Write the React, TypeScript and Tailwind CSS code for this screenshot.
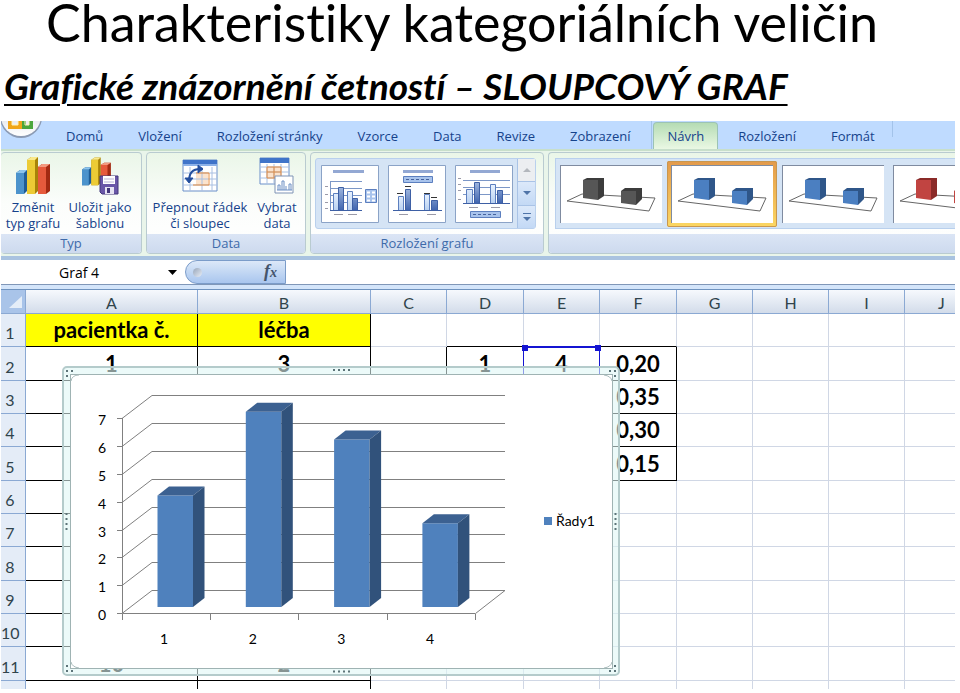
import type { ReactNode } from "react";
import clsx from "clsx";

const TABS = ["Domů", "Vložení", "Rozložení stránky", "Vzorce", "Data", "Revize", "Zobrazení"];

const COLUMNS = ["A", "B", "C", "D", "E", "F", "G", "H", "I", "J"];

const ROWS = [1, 2, 3, 4, 5, 6, 7, 8, 9, 10, 11];

const CELLS: Record<string, string> = {
  A1: "pacientka č.",
  B1: "léčba",
  A2: "1",
  B2: "3",
  D2: "1",
  E2: "4",
  F2: "0,20",
  F3: "0,35",
  F4: "0,30",
  F5: "0,15",
  A11: "10",
  B11: "2",
};

const SERIES = [4, 7, 6, 3];

export default function App() {
  return (
    <div className="bg-white font-['Lato',sans-serif] text-black">
      <header className="h-[121px] [font-variant-ligatures:none]">
        <h1 className="pr-[36px] text-center text-[52px] leading-[44px] whitespace-nowrap">
          Charakteristiky kategoriálních veličin
        </h1>
        <h2 className="mt-[20px] pl-[4px] text-[37px] leading-[44px] font-bold italic underline decoration-2 underline-offset-4 whitespace-nowrap">
          Grafické znázornění četností – SLOUPCOVÝ GRAF
        </h2>
      </header>
      <main className="ml-px mr-[5px] overflow-hidden">
        <TabBar />
        <Ribbon />
        <FormulaBar />
        <Sheet />
      </main>
    </div>
  );
}

// ── Ribbon ───────────────────────────────────────────────────────────

function TabBar() {
  return (
    <nav className="relative flex h-[28px] items-end bg-[#bfdbff] font-['Open_Sans',sans-serif] text-[13px] leading-[26px] text-[#15428b] whitespace-nowrap">
      <OfficeButton />
      <div className="flex flex-none gap-[35px] pl-[65px]">
        {TABS.map((tab) => (
          <button key={tab} type="button">{tab}</button>
        ))}
      </div>
      <div className="ml-[21px] flex h-full flex-none items-end border-l border-[#a3c3ea]">
        <button
          type="button"
          className="ml-px rounded-t-[4px] border border-b-0 border-[#9cc3b4] bg-linear-to-b from-[#b5dcb4] to-[#eaf8e4] px-[13px]"
        >
          Návrh
        </button>
        <button type="button" className="ml-[20px]">Rozložení</button>
        <button type="button" className="ml-[35px]">Formát</button>
      </div>
      <div className="ml-[17px] h-[16px] self-start border-l border-[#a3c3ea]" />
    </nav>
  );
}

function OfficeButton() {
  return (
    <button type="button" aria-label="Office" className="absolute left-0 top-0">
      <svg width="42" height="18" viewBox="0 0 42 18">
        <defs>
          <linearGradient id="orb" x1="0" y1="0" x2="0" y2="1">
            <stop offset="0" stopColor="#c6cbd6" />
            <stop offset="1" stopColor="#ffffff" />
          </linearGradient>
        </defs>
        <circle cx="20" cy="-4" r="21" fill="#8b9ab3" />
        <circle cx="20" cy="-5" r="20" fill="url(#orb)" />
        <path d="M9 0v6h10V0" fill="none" stroke="#f0a619" strokeWidth="4" />
        <path d="M23 0v6h7V0" fill="none" stroke="#4ca63c" strokeWidth="4" />
        <path d="M11 0v4h6V0M24 0v4h4V0" fill="none" stroke="#fff3b8" strokeWidth="1" />
      </svg>
    </button>
  );
}

function Ribbon() {
  return (
    <div className="flex h-[111px] gap-[4px] border-b-[4px] border-t-[2px] border-b-[#a9c3e0] border-t-[#c8dfcb] bg-[#e9f5ea] pt-[1px] pb-[2px] font-['Open_Sans',sans-serif] text-[13px] leading-[16px] text-[#15428b]">
      <Group label="Typ" className="w-[141px] border-l-0">
        <div className="flex">
          <Tool icon={<ChartTypeIcon />} label={"Změnit\ntyp grafu"} className="w-[64px]" />
          <Tool icon={<SaveTemplateIcon />} label={"Uložit jako\nšablonu"} className="w-[70px]" />
        </div>
      </Group>
      <Group label="Data" className="w-[160px]">
        <div className="flex">
          <Tool icon={<SwapIcon />} label={"Přepnout řádek\nči sloupec"} className="w-[106px]" />
          <Tool icon={<SelectDataIcon />} label={"Vybrat\ndata"} className="w-[48px]" />
        </div>
      </Group>
      <Group label="Rozložení grafu" className="w-[234px]">
        <div className="ml-[4px] mr-[7px] mt-[5px] flex h-[71px] rounded-[3px] border border-[#b9d0ed] bg-[#d5e4f5]">
          <div className="flex flex-1 items-center gap-[9px] pl-[5px]">
            {[0, 1, 2].map((kind) => (
              <button key={kind} type="button" aria-label={`Rozložení ${kind + 1}`}>
                <LayoutThumb kind={kind} />
              </button>
            ))}
          </div>
          <GalleryScroller />
        </div>
      </Group>
      <Group label="" className="min-w-0 flex-1 rounded-r-none border-r-0">
        <div className="ml-[6px] mt-[5px] flex h-[71px] items-center gap-px overflow-hidden border border-r-0 border-[#b9d0ed] bg-[#d5e4f5]">
          <StyleThumb name="Styl 1" front="#565656" side="#3c3c3c" />
          <StyleThumb name="Styl 2" front="#4b7fc1" side="#2f5689" selected />
          <StyleThumb name="Styl 3" front="#4b7fc1" side="#2f5689" />
          <StyleThumb name="Styl 4" front="#c14441" side="#8a2a28" />
        </div>
      </Group>
    </div>
  );
}

function Group({ label, className, children }: { label: string; className: string; children: ReactNode }) {
  return (
    <section
      className={clsx(
        "flex flex-none flex-col overflow-hidden rounded-[4px] border border-[#b9cbd0] bg-linear-to-b from-[#eaf6e8] via-[#fbfdfb] to-white",
        className,
      )}
    >
      <div className="flex-1">{children}</div>
      <div className="h-[19px] bg-linear-to-b from-[#dbe5f5] to-[#cddaee] text-center leading-[18px] text-[#3e6aaa]">
        {label}
      </div>
    </section>
  );
}

function Tool({ icon, label, className }: { icon: ReactNode; label: string; className: string }) {
  return (
    <button type="button" className={clsx("flex flex-none flex-col items-center pt-[4px]", className)}>
      {icon}
      <span className="mt-[4px] leading-[16px] whitespace-pre">{label}</span>
    </button>
  );
}

function Bars3D() {
  return (
    <g>
      <path d="M0 14l4-3h7v21l-3 3H0z" fill="#1f5c96" />
      <path d="M0 14h8v21H0z" fill="#4c93cc" />
      <path d="M0 14l4-3h7l-3 3z" fill="#8cc4ec" />
      <path d="M22 8l4-3h8v27l-4 3h-8z" fill="#a32a12" />
      <path d="M22 8h8v27h-8z" fill="#e65a3c" />
      <path d="M22 8l4-3h8l-4 3z" fill="#f39a80" />
      <path d="M11 1l4-3h7v34l-3 3h-8z" fill="#a88308" />
      <path d="M11 1h8v34h-8z" fill="#eccb35" />
      <path d="M11 1l4-3h7l-3 3z" fill="#fae98b" />
    </g>
  );
}

function ChartTypeIcon() {
  return (
    <svg width="36" height="38" viewBox="0 0 36 38">
      <g transform="translate(1 2)"><Bars3D /></g>
    </svg>
  );
}

function SaveTemplateIcon() {
  return (
    <svg width="38" height="38" viewBox="0 0 38 38">
      <g transform="translate(1 2) scale(.85 .75)"><Bars3D /></g>
      <path d="M19 19h18v18H21l-2-2z" fill="#6a57a8" stroke="#43367b" />
      <path d="M22 19h12v8H22z" fill="#fff" />
      <path d="M23 22h10M23 25h10" stroke="#b9b3d6" />
      <path d="M24 30h9v7h-9z" fill="#e6e3f3" />
      <path d="M26 31h3v5h-3z" fill="#43367b" />
    </svg>
  );
}

function SwapIcon() {
  return (
    <svg width="38" height="38" viewBox="0 0 38 38">
      <path d="M2 3h34v31H2z" fill="#fff" stroke="#6a8fc9" />
      <path d="M2 3h34v4H2z" fill="#3f74c9" />
      <path d="M2 7h34v2H2z" fill="#8db2e8" />
      <path d="M15 15h12v13H15z" fill="#fbe3cd" />
      <path d="M2 16h34M2 22h34M2 28h34M9 10v24M21 10v24M31 10v24" stroke="#a9c0e2" />
      <path d="M15 16h13v12H12" fill="none" stroke="#e98d3d" />
      <path d="M8 24C8 16 12 12 19 12" fill="none" stroke="#244f9e" strokeWidth="2" />
      <path d="M17 8l5 4-5 4z M4 21h8l-4 5z" fill="#244f9e" stroke="#244f9e" />
    </svg>
  );
}

function SelectDataIcon() {
  return (
    <svg width="36" height="38" viewBox="0 0 36 38">
      <path d="M1 1h29v26H1z" fill="#fff" stroke="#6a8fc9" />
      <path d="M1 1h29v5H1z" fill="#3f74c9" />
      <path d="M8 10h14v11H8z" fill="#fbe3cd" />
      <path d="M1 10h29M1 15h29M1 21h29M8 7v20M15 7v20M22 7v20" stroke="#a9c0e2" />
      <path d="M8 10h14v11H8zM15 10v11M8 15h14" fill="none" stroke="#e98d3d" />
      <path d="M16 19h18v17H16z" fill="#fff" stroke="#7f93b5" />
      <path d="M19 33v-5h2v5M23 33v-9h2v9M27 33v-4M30 33v-6h2v6" fill="none" stroke="#6d8fc4" />
      <path d="M18 33h15" stroke="#6d8fc4" />
    </svg>
  );
}

// Small chart previews: 0 = legend right, 1 = legend top, 2 = legend bottom
function LayoutThumb({ kind }: { kind: number }) {
  return (
    <svg width="58" height="58" viewBox="0 0 58 58">
      <defs>
        <linearGradient id="thumbDark" x1="0" y1="0" x2="0" y2="1">
          <stop offset="0" stopColor="#9db5de" />
          <stop offset="1" stopColor="#3f64ae" />
        </linearGradient>
        <linearGradient id="thumbLight" x1="0" y1="0" x2="0" y2="1">
          <stop offset="0" stopColor="#e8f2ff" />
          <stop offset="1" stopColor="#b8d0f0" />
        </linearGradient>
      </defs>
      <path d="M.5 .5h57v57H.5z" fill="#fff" stroke="#8ba3c7" />
      <path d={kind === 0 ? "M12 5h31v3H12z" : "M15 5h30v3H15z"} fill="#93a8d3" />
      {kind === 0 && (
        <g>
          <path d="M9 16.5h32M9 23.5h32M9 30.5h32M9 37.5h32M9.5 16v29" stroke="#7c97c7" />
          <path d="M4 21.5h3M4 29.5h3M4 37.5h3M4 43.5h3M13 49.5h9M27 49.5h9" stroke="#9a9aa8" />
          <path d="M12.5 28.5h5v17h-5zM26.5 26.5h5v19h-5z" fill="url(#thumbLight)" stroke="#5c7fbf" />
          <path d="M17.5 22.5h5v23h-5zM31.5 33.5h5v12h-5z" fill="url(#thumbDark)" stroke="#3e60a5" />
          <path d="M9 45.5h32" stroke="#3e60a5" />
          <path d="M44.5 24.5h11v13h-11z" fill="#a8c3ec" stroke="#5c7fbf" />
          <path d="M46 27.5h3M51 27.5h3M46 31.5h3M51 31.5h3M46 35.5h3M51 35.5h3" stroke="#fff" strokeWidth="2" />
        </g>
      )}
      {kind === 1 && (
        <g>
          <path d="M15.5 11.5h29v6h-29z" fill="#a8c3ec" stroke="#5c7fbf" />
          <path d="M18 14.5h24" stroke="#46639e" strokeDasharray="3 2" />
          <path d="M10.5 31.5h5v14h-5zM36.5 29.5h5v16h-5z" fill="url(#thumbLight)" stroke="#5c7fbf" />
          <path d="M17.5 24.5h5v21h-5zM43.5 35.5h6v10h-6z" fill="url(#thumbDark)" stroke="#3e60a5" />
          <path d="M5 45.5h49" stroke="#3e60a5" />
          <path d="M9 28.5h6M17 21.5h6M36 28.5h6M43 32.5h6" stroke="#333" />
          <path d="M11 49.5h9M39 49.5h9" stroke="#9a9aa8" />
        </g>
      )}
      {kind === 2 && (
        <g>
          <path d="M8 15.5h47M8 22.5h47M8 29.5h47" stroke="#7c97c7" />
          <path d="M3 13.5h3M3 19.5h3M3 25.5h3M3 34.5h3M14 42.5h9M36 42.5h9" stroke="#9a9aa8" />
          <path d="M11.5 24.5h6v14h-6zM35.5 19.5h5v19h-5z" fill="url(#thumbLight)" stroke="#5c7fbf" />
          <path d="M19.5 17.5h5v21h-5zM42.5 25.5h5v13h-5z" fill="url(#thumbDark)" stroke="#3e60a5" />
          <path d="M8 38.5h47" stroke="#3e60a5" />
          <path d="M15.5 46.5h30v6h-30z" fill="#a8c3ec" stroke="#5c7fbf" />
          <path d="M18 49.5h25" stroke="#46639e" strokeDasharray="3 2" />
        </g>
      )}
    </svg>
  );
}

function GalleryScroller() {
  return (
    <div className="flex w-[18px] flex-col divide-y divide-[#a9c3e6] border-l border-[#a9c3e6]">
      <button type="button" aria-label="Nahoru" className="flex flex-1 items-center justify-center bg-[#eceef1]">
        <svg width="8" height="4"><path d="M0 4l4-4 4 4z" fill="#b3b7bd" /></svg>
      </button>
      <button type="button" aria-label="Dolů" className="flex flex-1 items-center justify-center bg-linear-to-b from-[#dce9fa] to-[#c3d9f5]">
        <svg width="8" height="4"><path d="M0 0l4 4 4-4z" fill="#4f74a8" /></svg>
      </button>
      <button type="button" aria-label="Více" className="flex flex-1 items-center justify-center bg-linear-to-b from-[#dce9fa] to-[#c3d9f5]">
        <svg width="8" height="8"><path d="M0 0h8v1H0zM0 4l4 4 4-4z" fill="#4f74a8" /></svg>
      </button>
    </div>
  );
}

interface StyleThumbProps {
  name: string;
  front: string;
  side: string;
  selected?: boolean;
}

function StyleThumb({ name, front, side, selected }: StyleThumbProps) {
  return (
    <button
      type="button"
      aria-label={name}
      className={clsx(
        "flex-none rounded-[2px] p-[4px]",
        selected && "bg-linear-to-b from-[#e39a4b] to-[#fbd763] outline outline-[#c9974f] -outline-offset-1",
      )}
    >
      <svg width="102" height="58" viewBox="0 0 102 58">
        <path d="M0 0h102v58H0z" fill="#fff" />
        <path d="M0 .5h102M.5 0v58" stroke="#7f8ba0" />
        <path d="M7 36l15-7 73 4-6 13z" fill="none" stroke="#666" />
        <path d="M23 15l4-2h17v18l-6 4z" fill={side} />
        <path d="M23 15h15v20l-15-2z" fill={front} />
        <path d="M61 26l4-3h17v11l-6 6z" fill={side} />
        <path d="M61 26h15v14l-15-2z" fill={front} />
      </svg>
    </button>
  );
}

// ── Formula bar ──────────────────────────────────────────────────────

function FormulaBar() {
  return (
    <div className="flex h-[29px] border-b-[4px] border-b-[#d4e5fa] bg-white">
      <div className="flex flex-1 border-b border-[#8097b8]">
        <div className="flex w-[184px] flex-none items-center">
          <input
            aria-label="Pole názvů"
            defaultValue="Graf 4"
            className="w-[156px] bg-transparent text-center font-['Open_Sans',sans-serif] text-[14px] text-black outline-none"
          />
          <button type="button" aria-label="Vybrat název" className="ml-[11px]">
            <svg width="9" height="5"><path d="M0 0h9L4.5 5z" /></svg>
          </button>
        </div>
        <div className="flex w-[101px] flex-none items-center justify-between rounded-l-full border border-[#7b9cc9] bg-linear-to-b from-[#dce8f8] to-[#a9c6ee] pl-[7px] pr-[8px]">
          <span className="size-[9px] rounded-full bg-linear-to-br from-[#98a6ba] to-[#e9eef6]" />
          <button type="button" aria-label="Vložit funkci" className="font-['Liberation_Serif',serif] text-[18px] leading-[18px] font-bold italic text-[#44546c]">
            f<span className="text-[14px]">x</span>
          </button>
        </div>
        <input aria-label="Řádek vzorců" className="min-w-0 flex-1 outline-none" />
      </div>
    </div>
  );
}

// ── Sheet ────────────────────────────────────────────────────────────

function Sheet() {
  return (
    <div className="relative border-t border-[#6f93bf]">
      <table className="w-full table-fixed border-separate border-spacing-0">
        <colgroup>
          <col className="w-[25px]" />
          <col className="w-[172px]" />
          <col className="w-[173px]" />
          {["C", "D", "E", "F", "G", "H", "I"].map((c) => (
            <col key={c} className={c === "D" || c === "F" ? "w-[77px]" : "w-[76px]"} />
          ))}
          <col />
        </colgroup>
        <thead>
          <tr className="h-[24px] text-[16px] leading-[20px] text-[#30444c]">
            <th className="border-b border-r border-[#8ba9d3] bg-[#a9c4e9] p-0">
              <svg className="ml-auto" width="18" height="18"><path d="M15 3v12H2z" fill="#e4edf8" /></svg>
            </th>
            {COLUMNS.map((c) => (
              <th
                key={c}
                scope="col"
                className={clsx(
                  "border-b border-[#8ba9d3] bg-linear-to-b from-[#f6f9fd] to-[#d3dcea] p-0 pt-[2px] font-normal",
                  c === "J" ? "pl-[33px] text-left" : "border-r",
                )}
              >
                {c}
              </th>
            ))}
          </tr>
        </thead>
        <tbody>
          {ROWS.map((row) => (
            <tr key={row} className={row % 3 === 2 ? "h-[34px]" : "h-[33px]"}>
              <th scope="row" className="border-b border-r border-[#8ba9d3] bg-[#e4ecf7] p-0 pr-[6px] pt-[6px] text-[16px] leading-[20px] font-normal text-[#30444c]">
                {row}
              </th>
              {COLUMNS.map((c) => (
                <Cell key={c} col={c} row={row} />
              ))}
            </tr>
          ))}
          <tr className="h-[8px]">
            <td className="border-r border-[#8ba9d3] bg-[#e4ecf7] p-0" />
            {COLUMNS.map((c) => (
              <td key={c} className={clsx("p-0", c !== "J" && "border-r", c === "A" || c === "B" ? "border-black" : "border-[#d0d7e5]")} />
            ))}
          </tr>
        </tbody>
      </table>
      <ChartObject />
    </div>
  );
}

function Cell({ col, row }: { col: string; row: number }) {
  const patient = col === "A" || col === "B";
  const boxed = "DEF".includes(col);
  const inBox = row >= 2 && row <= 5;
  const blackRight = patient || (inBox && (boxed || col === "C"));
  const blackBottom = patient || (boxed && row <= 5);

  return (
    <td
      className={clsx(
        "relative border-b p-0 text-center text-[22px] leading-[26px] font-bold whitespace-nowrap",
        col !== "J" && "border-r",
        blackRight ? "border-r-black" : "border-r-[#d0d7e5]",
        blackBottom ? "border-b-black" : "border-b-[#d0d7e5]",
        patient && row === 1 && "bg-[#ffff00]",
      )}
    >
      {CELLS[`${col}${row}`]}
      {col === "E" && row === 2 && (
        <span className="absolute -inset-x-px -top-px bottom-0 border-x border-t-2 border-[#1414d2]">
          <span className="absolute -left-[2px] -top-[3px] size-[6px] bg-[#1414d2]" />
          <span className="absolute -right-[2px] -top-[3px] size-[6px] bg-[#1414d2]" />
        </span>
      )}
    </td>
  );
}

// ── Embedded chart ───────────────────────────────────────────────────

const DARK = "#5d7479";

function ChartObject() {
  return (
    <svg
      className="absolute left-[61px] top-[76px] font-['Lato',sans-serif] text-[14px]"
      width="558"
      height="310"
      viewBox="62 366 558 310"
      role="img"
      aria-label="Sloupcový graf"
    >
      {/* Selection frame */}
      <rect x="63" y="367" width="556" height="308" rx="4" fill="#e0f7f5" fillOpacity=".6" stroke="#b4cbcb" strokeWidth="2" />
      <rect x="70.5" y="374.5" width="542" height="294" fill="#fff" stroke="#9fb3b3" />
      <path d="M71 381q1-6 8-6M604 375q7 1 8 6M71 662q1 5 8 6M604 668q7-1 8-6" fill="none" stroke="#a9bcbc" />
      <g fill="none" stroke={DARK} strokeWidth="2" strokeDasharray="2 3">
        <path d="M333 370h17M333 671.5h17M66.5 513v17M615.5 513v17" />
        <path d="M66 371h7M66 376h2M609 371h7M614 376h2M66 671h7M66 666h2M609 671h7M614 666h2" />
      </g>

      {/* Walls and gridlines */}
      {[0, 1, 2, 3, 4, 5, 6, 7].map((v) => {
        const y = Math.round(613 - v * 27.8) + 0.5;
        return (
          <g key={v}>
            <path d={`M117 ${y}h5L152 ${y - 23}H505`} fill="none" stroke="#808080" />
            <text x="102" y={y + 6} textAnchor="middle">{v}</text>
          </g>
        );
      })}
      <path d="M122.5 418v195.5H475.5L505 590.5" fill="none" stroke="#808080" />
      <path d="M122.5 614v6M210.5 614v6M298.5 614v6M387.5 614v6M475.5 614v6" stroke="#808080" />

      {/* Columns */}
      {SERIES.map((value, i) => {
        const x = 157.5 + i * 88.3;
        const top = 607 - value * 27.9;
        return (
          <g key={i}>
            <path d={`M${x} ${top}h35.5V607H${x}z`} fill="#4f81bd" />
            <path d={`M${x} ${top}l11.5-9h35.5l-11.5 9z`} fill="#3c6191" />
            <path d={`M${x + 35.5} ${top}l11.5-9V598l-11.5 9z`} fill="#31527b" />
            <text x={164 + i * 88.7} y="644" textAnchor="middle">{i + 1}</text>
          </g>
        );
      })}

      {/* Legend */}
      <path d="M544 517h8v8h-8z" fill="#4f81bd" />
      <text x="556" y="526">Řady1</text>
    </svg>
  );
}
